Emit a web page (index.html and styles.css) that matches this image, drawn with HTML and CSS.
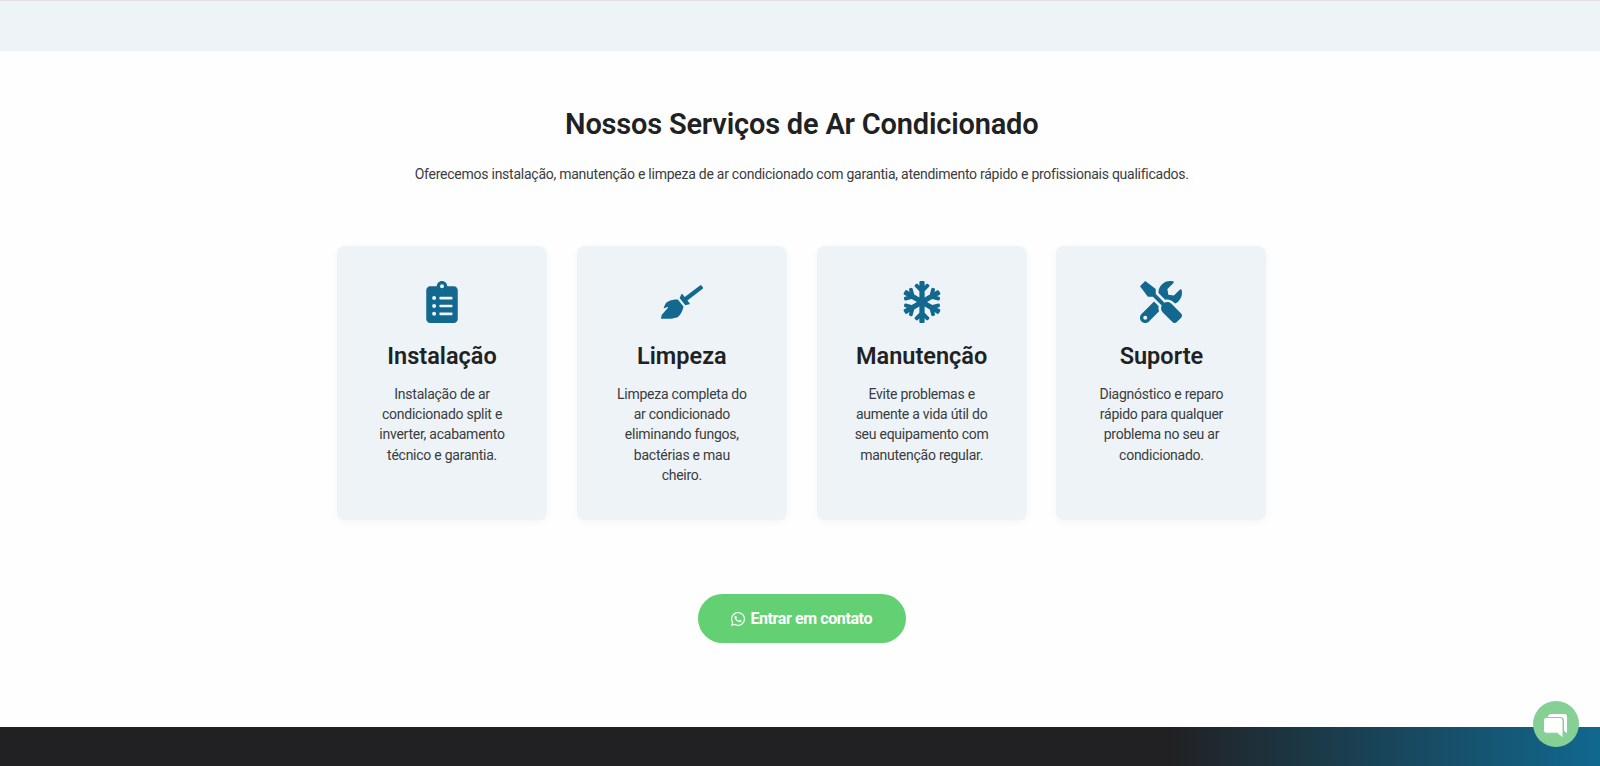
FILE: index.html
```html
<!DOCTYPE html>
<html lang="pt-br">

<head>
    <meta charset="UTF-8">
    <meta name="viewport" content="width=device-width, initial-scale=1.0">
    <title>Serviços de Ar Condicionado</title>
    <link rel="stylesheet" href="styles.css">
</head>

<body>
    <div class="faixa"></div>

    <section class="servicos">
        <h2>Nossos Serviços de Ar Condicionado</h2>
        <p class="intro">Oferecemos instalação, manutenção e limpeza de ar condicionado com garantia, atendimento rápido e profissionais qualificados.</p>

        <div class="cards">
            <div class="card">
                <svg class="icone" viewBox="0 0 384 512"><path d="M336 64h-80c0-35.3-28.7-64-64-64s-64 28.7-64 64H48C21.5 64 0 85.5 0 112v352c0 26.5 21.5 48 48 48h288c26.5 0 48-21.5 48-48V112c0-26.5-21.5-48-48-48zM96 424c-13.3 0-24-10.7-24-24s10.7-24 24-24 24 10.7 24 24-10.7 24-24 24zm0-96c-13.3 0-24-10.7-24-24s10.7-24 24-24 24 10.7 24 24-10.7 24-24 24zm0-96c-13.3 0-24-10.7-24-24s10.7-24 24-24 24 10.7 24 24-10.7 24-24 24zm96-192c13.3 0 24 10.7 24 24s-10.7 24-24 24-24-10.7-24-24 10.7-24 24-24zm128 368c0 4.4-3.6 8-8 8H168c-4.4 0-8-3.6-8-8v-16c0-4.4 3.6-8 8-8h144c4.4 0 8 3.6 8 8v16zm0-96c0 4.4-3.6 8-8 8H168c-4.4 0-8-3.6-8-8v-16c0-4.4 3.6-8 8-8h144c4.4 0 8 3.6 8 8v16zm0-96c0 4.4-3.6 8-8 8H168c-4.4 0-8-3.6-8-8v-16c0-4.4 3.6-8 8-8h144c4.4 0 8 3.6 8 8v16z"/></svg>
                <h3>Instalação</h3>
                <p>Instalação de ar condicionado split e inverter, acabamento técnico e garantia.</p>
            </div>
            <div class="card">
                <svg class="icone" viewBox="0 0 640 512"><path d="M256.47 216.77l86.73 109.18s-16.6 102.36-76.57 150.12C206.66 523.85 0 510.19 0 510.19s3.8-23.14 11-55.43l94.62-112.17c3.97-4.7-.87-11.62-6.65-9.5l-60.4 22.09c14.44-41.66 32.72-80.04 54.6-97.47 59.97-47.76 163.3-40.94 163.3-40.94zM636.53 31.03l-19.86-25c-5.49-6.9-15.52-8.05-22.41-2.56l-232.48 177.8-34.14-42.97c-5.09-6.41-15.14-5.21-18.59 2.21l-25.33 54.55 86.73 109.18 58.8-12.45c8-1.69 12.42-10.2 7.34-16.6l-34.08-42.9 232.48-177.8c6.89-5.48 8.04-15.53 2.55-22.42z"/></svg>
                <h3>Limpeza</h3>
                <p>Limpeza completa do ar condicionado eliminando fungos, bactérias e mau cheiro.</p>
            </div>
            <div class="card">
                <svg class="icone" viewBox="0 0 448 512"><path d="M440.3 345.2l-33.8-19.5 26-7c8.2-2.2 13.1-10.7 10.9-18.9l-4-14.9c-2.2-8.2-10.7-13.1-18.9-10.9l-70.8 19-63.9-37 63.8-36.9 70.8 19c8.2 2.2 16.7-2.7 18.9-10.9l4-14.9c2.2-8.2-2.7-16.7-10.9-18.9l-26-7 33.8-19.5c7.4-4.3 9.9-13.7 5.7-21.1L430.4 119c-4.3-7.4-13.7-9.9-21.1-5.7l-33.8 19.5 7-26c2.2-8.2-2.7-16.7-10.9-18.9l-14.9-4c-8.2-2.2-16.7 2.7-18.9 10.9l-19 70.8-62.8 36.2v-77.5l53.7-53.7c6.2-6.2 6.2-16.4 0-22.6l-11.3-11.3c-6.2-6.2-16.4-6.2-22.6 0L256 56.4V16c0-8.8-7.2-16-16-16h-32c-8.8 0-16 7.2-16 16v40.4l-19.7-19.7c-6.2-6.2-16.4-6.2-22.6 0L138.3 48c-6.3 6.2-6.3 16.4 0 22.6l53.7 53.7v77.5l-62.8-36.2-19-70.8c-2.2-8.2-10.7-13.1-18.9-10.9l-14.9 4c-8.2 2.2-13.1 10.7-10.9 18.9l7 26-33.8-19.5c-7.4-4.3-16.8-1.7-21.1 5.7L2.1 145.7c-4.3 7.4-1.7 16.8 5.7 21.1l33.8 19.5-26 7c-8.3 2.2-13.2 10.7-11 19l4 14.9c2.2 8.2 10.7 13.1 18.9 10.9l70.8-19 63.8 36.9-63.8 36.9-70.8-19c-8.2-2.2-16.7 2.7-18.9 10.9l-4 14.9c-2.2 8.2 2.7 16.7 10.9 18.9l26 7-33.8 19.6c-7.4 4.3-9.9 13.7-5.7 21.1l15.5 26.8c4.3 7.4 13.7 9.9 21.1 5.7l33.8-19.5-7 26c-2.2 8.2 2.7 16.7 10.9 18.9l14.9 4c8.2 2.2 16.7-2.7 18.9-10.9l19-70.8 62.8-36.2v77.5l-53.7 53.7c-6.3 6.2-6.3 16.4 0 22.6l11.3 11.3c6.2 6.2 16.4 6.2 22.6 0l19.7-19.7V496c0 8.8 7.2 16 16 16h32c8.8 0 16-7.2 16-16v-40.4l19.7 19.7c6.2 6.2 16.4 6.2 22.6 0l11.3-11.3c6.2-6.2 6.2-16.4 0-22.6L256 387.7v-77.5l62.8 36.2 19 70.8c2.2 8.2 10.7 13.1 18.9 10.9l14.9-4c8.2-2.2 13.1-10.7 10.9-18.9l-7-26 33.8 19.5c7.4 4.3 16.8 1.7 21.1-5.7l15.5-26.8c4.3-7.3 1.8-16.8-5.6-21z"/></svg>
                <h3>Manutenção</h3>
                <p>Evite problemas e aumente a vida útil do seu equipamento com manutenção regular.</p>
            </div>
            <div class="card">
                <svg class="icone" viewBox="0 0 512 512"><path d="M501.1 395.7L384 278.6c-23.1-23.1-57.6-27.6-85.4-13.9L192 158.1V96L64 0 0 64l96 128h62.1l106.6 106.6c-13.6 27.8-9.2 62.3 13.9 85.4l117.1 117.1c14.6 14.6 38.2 14.6 52.7 0l52.7-52.7c14.5-14.6 14.5-38.2 0-52.7zM331.7 225c28.3 0 54.9 11 74.9 31l19.4 19.4c15.8-6.9 30.8-16.5 43.8-29.5 37.1-37.1 49.7-89.3 37.9-136.7-2.2-9-13.5-12.1-20.1-5.5l-74.4 74.4-67.9-11.3L334 98.9l74.4-74.4c6.6-6.6 3.4-17.9-5.7-20.2-47.4-11.7-99.6.9-136.6 37.9-28.5 28.5-41.9 66.1-41.2 103.6l82.1 82.1c8.1-1.9 16.5-2.9 24.7-2.9zm-103.9 82l-56.7-56.7L18.7 402.8c-25 25-25 65.5 0 90.5s65.5 25 90.5 0l123.6-123.6c-7.6-19.9-9.9-41.6-5-62.7zM64 472c-13.2 0-24-10.8-24-24 0-13.3 10.7-24 24-24s24 10.7 24 24c0 13.2-10.7 24-24 24z"/></svg>
                <h3>Suporte</h3>
                <p>Diagnóstico e reparo rápido para qualquer problema no seu ar condicionado.</p>
            </div>
        </div>

        <a href="#" class="botao">
            <svg viewBox="0 0 448 512"><path d="M380.9 97.1C339 55.1 283.2 32 223.9 32c-122.4 0-222 99.6-222 222 0 39.1 10.2 77.3 29.6 111L0 480l117.7-30.9c32.4 17.7 68.9 27 106.1 27h.1c122.3 0 224.1-99.6 224.1-222 0-59.3-25.2-115-67.1-157zm-157 341.6c-33.2 0-65.7-8.9-94-25.7l-6.7-4-69.8 18.3L72 359.2l-4.4-7c-18.5-29.4-28.2-63.3-28.2-98.2 0-101.7 82.8-184.5 184.6-184.5 49.3 0 95.6 19.2 130.4 54.1 34.8 34.9 56.2 81.2 56.1 130.5 0 101.8-84.9 184.6-186.6 184.6zm101.2-138.2c-5.5-2.8-32.8-16.2-37.9-18-5.1-1.9-8.8-2.8-12.5 2.8-3.7 5.6-14.3 18-17.6 21.8-3.2 3.7-6.5 4.2-12 1.4-32.6-16.3-54-29.1-75.5-66-5.7-9.8 5.7-9.1 16.3-30.3 1.8-3.7.9-6.9-.5-9.7-1.4-2.8-12.5-30.1-17.1-41.2-4.5-10.8-9.1-9.3-12.5-9.5-3.2-.2-6.9-.2-10.6-.2-3.7 0-9.7 1.4-14.8 6.9-5.1 5.6-19.4 19-19.4 46.3 0 27.3 19.9 53.7 22.6 57.4 2.8 3.7 39.1 59.7 94.8 83.8 35.2 15.2 49 16.5 66.6 13.9 10.7-1.6 32.8-13.4 37.4-26.4 4.6-13 4.6-24.1 3.2-26.4-1.3-2.5-5-3.9-10.5-6.6z"/></svg>
            <span>Entrar em contato</span>
        </a>
    </section>

    <footer class="rodape"></footer>

    <a href="#" class="chat">
        <svg viewBox="0 0 46 46">
            <path class="fundo" d="M14.500 16C15.500 14 16.500 13 18.500 13H31.500q2.500 0 2.500 2.500V32.500l-3-3V20q0-4-4-4z"/>
            <path class="frente" d="M13 16.500h14q3 0 3 3V37l-6-4.800H13q-2.500 0-2.500-2.500V19q0-2.500 2.500-2.500z"/>
        </svg>
    </a>
</body>

</html>
```
FILE: styles.css
```css
* {
    margin: 0;
    padding: 0;
    box-sizing: border-box;
}

body {
    height: 766px;
    overflow: hidden;
    display: flex;
    flex-direction: column;
    background: #fefefe;
    font-family: Roboto, "Liberation Sans", sans-serif;
    color: #1f2122;
}

.faixa {
    height: 51px;
    flex-shrink: 0;
    background: #edf3f7;
    border-top: 1px solid #dfe0e0;
}

.servicos {
    height: 676px;
    flex-shrink: 0;
    padding: 53px 0 0 3.5px;
    display: flex;
    flex-direction: column;
    align-items: center;
    text-align: center;
}

.servicos h2 {
    font-size: 29px;
    line-height: 40px;
    font-weight: 600;
    letter-spacing: -0.2px;
}

.intro {
    margin-top: 20px;
    font-size: 14px;
    line-height: 20px;
    letter-spacing: -0.25px;
    color: #3a3c3e;
}

.cards {
    margin-top: 62px;
    display: grid;
    grid-template-columns: repeat(4, 210px);
    gap: 29.8px;
}

.card {
    height: 274px;
    padding: 35px 37px;
    border-radius: 8px;
    background: #edf3f7;
    box-shadow: 0 2px 8px rgba(0, 0, 0, 0.04);
}

.icone {
    display: block;
    width: 42px;
    height: 42px;
    margin: 0 auto;
    fill: #12688f;
}

.card h3 {
    margin-top: 16px;
    font-size: 23.5px;
    line-height: 34px;
    font-weight: 600;
}

.card p {
    margin-top: 11px;
    font-size: 14px;
    line-height: 20.2px;
    letter-spacing: -0.25px;
    color: #3a3c3e;
}

.botao {
    margin-top: 74px;
    width: 208px;
    height: 49px;
    display: flex;
    align-items: center;
    justify-content: center;
    gap: 5px;
    border-radius: 25px;
    background: #62d073;
    color: #fff;
    font-size: 16px;
    font-weight: 700;
    letter-spacing: -0.4px;
    text-decoration: none;
}

.botao svg {
    width: 14px;
    height: 16px;
    fill: #fff;
}

.rodape {
    flex: 1;
    background: linear-gradient(90deg, #212123 73%, #11688f 100%);
}

.chat {
    position: fixed;
    right: 21px;
    bottom: 19px;
    width: 46px;
    height: 46px;
    border-radius: 50%;
    background: #86cf95;
}

.chat svg {
    display: block;
}

.chat .fundo {
    fill: #fff;
}

.chat .frente {
    fill: #fff;
    stroke: #86cf95;
    stroke-width: 1;
}
```
